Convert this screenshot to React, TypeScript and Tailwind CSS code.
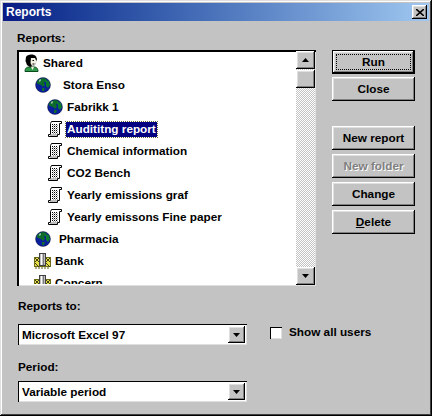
const raised = "shadow-[inset_-1px_-1px_0_#000,inset_1px_1px_0_#fff,inset_-2px_-2px_0_#808080,inset_2px_2px_0_#dfdfdf]";

function Globe() {
  return (
    <svg width="16" height="16" viewBox="0 0 16 16" className="shrink-0">
      <circle cx="8" cy="8" r="7.5" fill="#0a1f9c" />
      <path d="M3 3 L7 1 L11 1.5 L12 4 L9 5 L10 8 L8 10 L6 8 L3 7 L1.5 6 Z" fill="#0c6b2a" />
      <path d="M9 3 L14 4 L15 8 L13 11 L11 9 L11 6 Z" fill="#0a7a30" />
      <path d="M7 11 L10 11 L9 14 L7 14 Z" fill="#0c6b2a" />
      <path d="M4 3 L6 2 L6 4 L4 5 Z" fill="#8fb8a0" />
      <circle cx="8" cy="8" r="7.5" fill="none" stroke="#000" strokeOpacity="0.35" strokeWidth="1" />
    </svg>
  );
}

function Doc() {
  return (
    <svg width="14" height="16" viewBox="0 0 14 16" className="shrink-0">
      <path d="M3.5 .5 H13.5 V2.5 H11.5 V13.5 H9.5 V15.5 H.5 V13.5 H2.5 V2.5 Z" fill="#fff" stroke="#000" />
      <path d="M4 3.5 H10 M4 5.5 H10 M4 7.5 H10 M4 9.5 H10 M4 11.5 H10" stroke="#000" strokeDasharray="1 1" fill="none" />
      <path d="M4 4.5 H10 M4 6.5 H10 M4 8.5 H10 M4 10.5 H10 M4 12.5 H10" stroke="#a0a0a0" strokeDasharray="1 1" strokeDashoffset="1" fill="none" />
      <path d="M2 14 H9" stroke="#808080" fill="none" />
    </svg>
  );
}

function Person() {
  return (
    <svg width="15" height="18" viewBox="0 0 15 18" className="shrink-0">
      <path d="M1 17.5 C1 14 3 13 5 13 H10 C12 13 14 14 14 17.5 Z" fill="#2f9a4a" stroke="#0b4a1c" />
      <path d="M7 13 H10 L8.5 16 Z" fill="#f3f1e4" />
      <path d="M2 3 C3 0 10 -0.5 12 2.5 L13 5 L11 11 L6 13 L3 11 L1.5 7 Z" fill="#000" />
      <path d="M7 4 H11 L12.5 7.5 L11 11 L8 12 L6.5 9 Z" fill="#f3f1e4" />
      <path d="M8.5 6.5 H10 M8.5 10 H10.5" stroke="#000" fill="none" />
    </svg>
  );
}

function Bank() {
  return (
    <svg width="17" height="16" viewBox="0 0 17 16" className="shrink-0">
      <rect x=".5" y="4.5" width="16" height="9" fill="#e8e04a" stroke="#6b6b1a" />
      <path d="M1 5 L5 9 M5 5 L1 9 M12 5 L16 9 M16 5 L12 9 M1 10 L5 14 M12 10 L16 14" stroke="#3f3f10" fill="none" />
      <rect x="5.5" y=".5" width="6" height="12" fill="#c0c0c0" stroke="#404040" />
      <path d="M7.5 1 V12" stroke="#fff" />
      <path d="M9.5 1 V12" stroke="#7a7a7a" />
      <path d="M1 15 H16" stroke="#5a5a14" strokeDasharray="2 1" />
    </svg>
  );
}

const rows = [
  { cls: "pl-[5px] gap-[4px]", icon: <Person />, label: "Shared" },
  { cls: "pl-[16px] gap-[12px]", icon: <Globe />, label: "Stora Enso" },
  { cls: "pl-[28px] gap-[4px]", icon: <Globe />, label: "Fabrikk 1" },
  { cls: "pl-[29px] gap-[4px]", icon: <Doc />, label: "Audititng report", selected: true },
  { cls: "pl-[29px] gap-[5px]", icon: <Doc />, label: "Chemical information" },
  { cls: "pl-[29px] gap-[5px]", icon: <Doc />, label: "CO2 Bench" },
  { cls: "pl-[29px] gap-[5px]", icon: <Doc />, label: "Yearly emissions graf" },
  { cls: "pl-[29px] gap-[5px]", icon: <Doc />, label: "Yearly emissons Fine paper" },
  { cls: "pl-[16px] gap-[8px]", icon: <Globe />, label: "Pharmacia" },
  { cls: "pl-[15px] gap-[4px]", icon: <Bank />, label: "Bank" },
  { cls: "pl-[15px] gap-[4px]", icon: <Bank />, label: "Concern" },
];

function Arrow({ up }: { up?: boolean }) {
  return (
    <svg width="7" height="4" viewBox="0 0 7 4">
      <path d={up ? "M3.5 0 L7 4 H0 Z" : "M0 0 H7 L3.5 4 Z"} fill="#000" />
    </svg>
  );
}

function ScrollButton({ up }: { up?: boolean }) {
  return (
    <div className={`h-[18px] w-full shrink-0 bg-[#c3c3c3] flex items-center justify-center ${raised}`}>
      <Arrow up={up} />
    </div>
  );
}

function Btn({ label, className = "", disabled }: { label: React.ReactNode; className?: string; disabled?: boolean }) {
  return (
    <div
      className={`w-[83px] h-[24px] flex items-center justify-center bg-[#c3c3c3] ${raised} ${disabled ? "text-[#808080] [text-shadow:1px_1px_0_#fff]" : "text-black"} ${className}`}
    >
      {label}
    </div>
  );
}

function Combo({ value }: { value: string }) {
  return (
    <div className="w-[229px] h-[21px] flex items-center bg-white pl-[4px] pr-[2px] shadow-[inset_1px_1px_0_#000,inset_-1px_-1px_0_#dfdfdf]">
      <span className="flex-1">{value}</span>
      <div className={`w-[17px] h-[17px] bg-[#c3c3c3] flex items-center justify-center ${raised}`}>
        <Arrow />
      </div>
    </div>
  );
}

export default function App() {
  return (
    <div className="w-[432px] h-[416px] overflow-hidden bg-[#c3c3c3] p-[3px] text-[11.75px] leading-none font-bold text-black font-['Liberation_Sans',Arial,sans-serif] shadow-[inset_-1px_-1px_0_#000,inset_1px_1px_0_#dfdfdf,inset_-2px_-2px_0_#404040,inset_2px_2px_0_#fff]">
      <div className="h-[18px] bg-linear-to-r from-[#0a1a84] to-[#a0c8f0] flex items-center justify-between pl-[3px] pr-[2px] text-white">
        <span className="text-[12px]">Reports</span>
        <div className={`w-[15px] h-[14px] bg-[#c3c3c3] flex items-center justify-center ${raised}`}>
          <svg width="8" height="7" viewBox="0 0 8 7">
            <path d="M0 0 L8 7 M8 0 L0 7" stroke="#000" strokeWidth="1.6" />
          </svg>
        </div>
      </div>

      <div className="flex pl-[14px] pt-[10px]">
        <div className="w-[299px] shrink-0">
          <div className="h-[19px] pt-[1px]">Reports:</div>
          <div className="h-[236px] flex bg-white shadow-[inset_1px_1px_0_#000,inset_2px_2px_0_#000,inset_-1px_-1px_0_#dfdfdf]">
            <div className="flex-1 min-w-0 overflow-hidden pt-[2px] pl-[2px] mb-[2px]">
              {rows.map((r) => (
                <div key={r.label} className={`h-[22px] flex items-center whitespace-nowrap ${r.cls}`}>
                  {r.icon}
                  <span
                    className={
                      r.selected
                        ? "bg-[#000080] text-white px-[1px] h-[15px] flex items-center outline-1 outline-dotted outline-[#6a6a3a]"
                        : ""
                    }
                  >
                    {r.label}
                  </span>
                </div>
              ))}
            </div>
            <div className="w-[19px] shrink-0 mt-[1px] mb-[1px] mr-[1px] flex flex-col bg-[repeating-conic-gradient(#fff_0_25%,#c3c3c3_0_50%)] bg-size-[2px_2px]">
              <ScrollButton up />
              <div className={`h-[18px] w-full mt-[1px] bg-[#c3c3c3] ${raised}`} />
              <div className="flex-1" />
              <ScrollButton />
            </div>
          </div>
        </div>

        <div className="ml-[16px] flex flex-col">
          <div className="h-[19px]" />
          <div className="w-[83px] h-[24px] border border-black">
            <div className={`relative w-full h-full flex items-center justify-center ${raised}`}>
              Run
              <div className="absolute inset-[3px] border border-dotted border-black" />
            </div>
          </div>
          <Btn label="Close" className="mt-[3px]" />
          <Btn label="New report" className="mt-[25px]" />
          <Btn label="New folder" className="mt-[4px]" disabled />
          <Btn label="Change" className="mt-[4px]" />
          <Btn label={<span><u>D</u>elete</span>} className="mt-[4px]" />
        </div>
      </div>

      <div className="pl-[15px]">
        <div className="mt-[14px] h-[15px]">Reports to:</div>
        <div className="mt-[9px] flex items-start">
          <Combo value="Microsoft Excel 97" />
          <div className="ml-[23px] mt-[3px] w-[12px] h-[12px] bg-white shadow-[inset_1px_1px_0_#000,inset_-1px_-1px_0_#dfdfdf]" />
          <span className="ml-[7px] mt-[2px]">Show all users</span>
        </div>
        <div className="mt-[16px] h-[15px]">Period:</div>
        <div className="mt-[5px]">
          <Combo value="Variable period" />
        </div>
      </div>
    </div>
  );
}
